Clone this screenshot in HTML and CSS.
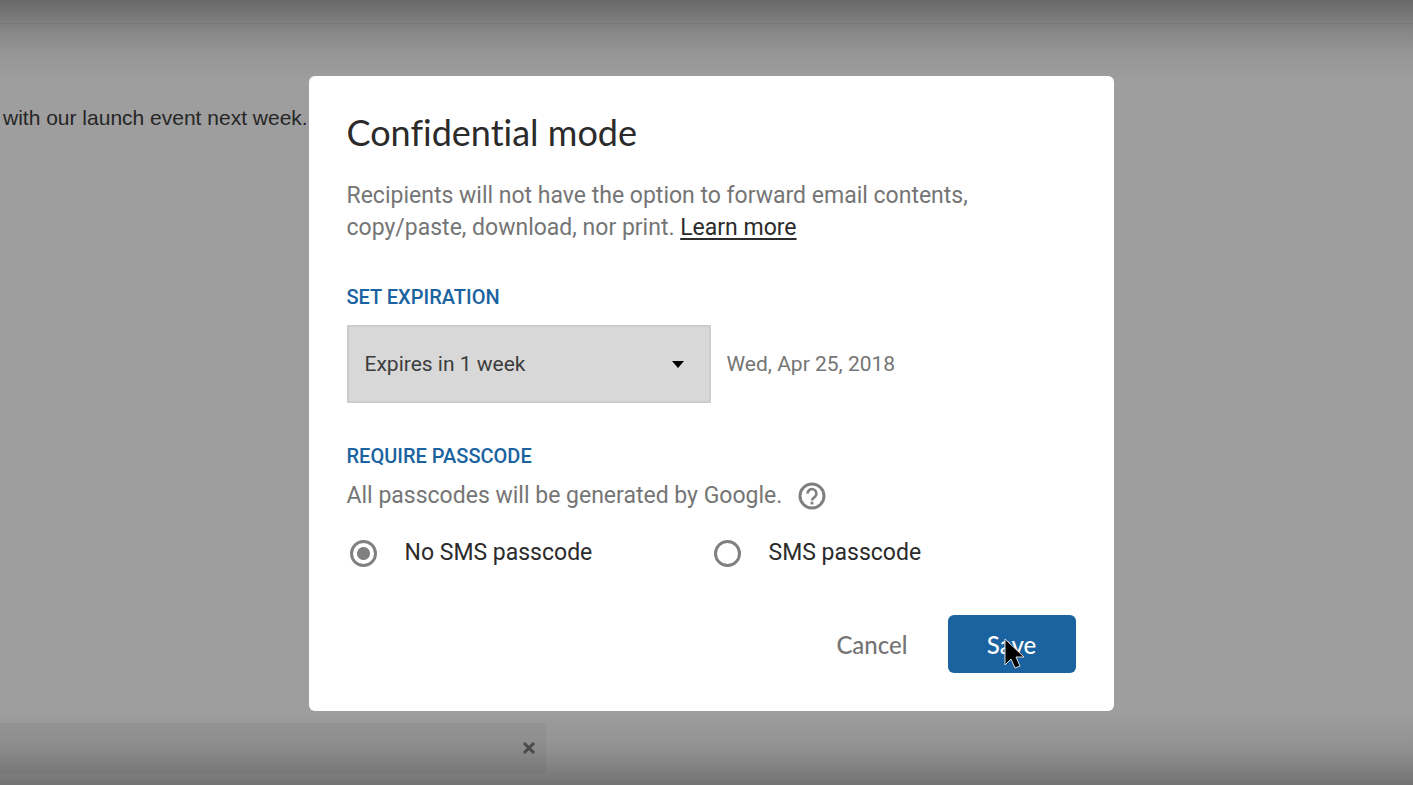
FILE: index.html
```
<!DOCTYPE html>
<html lang="en">
<head>
  <meta charset="UTF-8">
  <meta name="viewport" content="width=device-width, initial-scale=1.0">
  <title>Confidential mode</title>
  <link rel="stylesheet" href="styles.css">
</head>
<body>
  <div class="compose">
    <div class="subject"></div>
    <p class="message">with our launch event next week.</p>
    <div class="attachment">
      <button type="button" class="remove" aria-label="Remove attachment">
        <svg width="14" height="14" viewBox="0 0 14 14"><path d="M2 2l10 10M12 2L2 12" stroke="#4a4a4a" stroke-width="3"/></svg>
      </button>
    </div>
  </div>

  <div class="overlay">
    <form class="dialog" role="dialog" aria-labelledby="title">
      <h1 id="title">Confidential mode</h1>
      <p class="description"><span>Recipients will not have the option to forward email contents,</span> <span>copy/paste, download, nor print.</span> <a href="#">Learn more</a></p>

      <label class="section" for="expiration">SET EXPIRATION</label>
      <div class="expiration">
        <div class="select">
          <select id="expiration">
            <option>Expires in 1 day</option>
            <option selected>Expires in 1 week</option>
            <option>Expires in 1 month</option>
          </select>
          <svg class="arrow" width="12" height="7" viewBox="0 0 12 7"><path d="M0 0h12L6 7z"/></svg>
        </div>
        <span>Wed, Apr 25, 2018</span>
      </div>

      <h2 class="section" id="passcode">REQUIRE PASSCODE</h2>
      <div class="hint">
        <span>All passcodes will be generated by Google.</span>
        <button type="button" class="help" aria-label="Help">
          <svg width="28" height="28" viewBox="0 0 28 28" fill="none" stroke="#808080">
            <circle cx="14" cy="14" r="12" stroke-width="3"/>
            <path d="M9.6 11.6a4.4 4.4 0 1 1 7.6 2.9c-1.5 1.6-3.2 2-3.2 4.1" stroke-width="2.6"/>
            <path d="M14 19.8v2.6" stroke-width="2.8"/>
          </svg>
        </button>
      </div>

      <div class="options" role="radiogroup" aria-labelledby="passcode">
        <label><input type="radio" name="passcode" checked>No SMS passcode</label>
        <label><input type="radio" name="passcode">SMS passcode</label>
      </div>

      <div class="actions">
        <button type="button" class="cancel">Cancel</button>
        <button type="submit" class="save">Save
          <svg class="cursor" width="22" height="34" viewBox="0 0 22 34"><path d="M2 2v26l6-6 4 9 5-2-4-9h8z" fill="#000" stroke="#ddd" stroke-width="1"/></svg>
        </button>
      </div>
    </form>
  </div>
</body>
</html>
```
FILE: styles.css
```
* {
  box-sizing: border-box;
}
body {
  margin: 0;
  font-family: Roboto, Arial, sans-serif;
  font-size: 23px;
  line-height: 32px;
  color: #2b2b2b;
  background-color: #9e9e9e;
}
h1, h2, p {
  margin: 0;
}
button {
  border: none;
  padding: 0;
  background: none;
  cursor: pointer;
}
svg {
  display: block;
}
.compose {
  display: flex;
  flex-direction: column;
  min-height: 100vh;
  background: linear-gradient(#696969, #848484 28px, #949494 50px, #9e9e9e 80px, #9e9e9e calc(100% - 75px), #929292 calc(100% - 38px), #737373);
}
.subject {
  height: 24px;
  border-bottom: 1px solid #787878;
}
.message {
  flex: 1;
  padding: 78px 3px;
  font-family: "Liberation Sans", Arial, sans-serif;
  font-size: 21px;
  color: #262626;
}
.attachment {
  display: flex;
  justify-content: flex-end;
  align-items: center;
  width: 546px;
  height: 50px;
  margin-bottom: 12px;
  padding-right: 10px;
  background-color: rgba(0, 0, 0, 0.04);
}

/* dialog */
.overlay {
  position: fixed;
  inset: 0;
  display: flex;
  justify-content: center;
  align-items: center;
  padding: 2px 0 0 9px;
}
.dialog {
  width: 805px;
  max-width: 100%;
  padding: 35px 38px 38px;
  background-color: #fff;
  border-radius: 6px;
}
h1 {
  margin-bottom: 27px;
  font-family: Lato, sans-serif;
  font-size: 36px;
  font-weight: 400;
  line-height: 42px;
  font-variant-ligatures: none;
}
.description,
.expiration,
.hint {
  color: #757575;
}
.description a {
  color: #2b2b2b;
  text-underline-offset: 3px;
}
.section {
  display: block;
  margin-top: 41px;
  font-size: 20px;
  font-weight: 500;
  line-height: 24px;
  color: #1a63a0;
}
.expiration {
  display: flex;
  align-items: center;
  gap: 16px;
  margin-top: 16px;
  font-size: 21px;
}
.select {
  position: relative;
  width: 364px;
}
select {
  appearance: none;
  width: 100%;
  height: 78px;
  padding: 0 16px;
  border: 2px solid #cccccc;
  border-radius: 0;
  background-color: #d8d8d8;
  font: inherit;
  color: #3c3c3c;
}
.arrow {
  position: absolute;
  top: 36px;
  right: 27px;
  pointer-events: none;
}
.hint {
  display: flex;
  align-items: center;
  gap: 16px;
  margin-top: 12px;
}
.options {
  display: grid;
  grid-template-columns: 364px 1fr;
  margin-top: 25px;
}
.options label {
  display: flex;
  align-items: center;
  gap: 28px;
}
input[type="radio"] {
  appearance: none;
  width: 27px;
  height: 27px;
  margin: 0 0 0 3px;
  border: 3px solid #808080;
  border-radius: 50%;
}
input[type="radio"]:checked {
  background: radial-gradient(circle, #808080 6px, transparent 7px);
}
.actions {
  display: flex;
  justify-content: flex-end;
  gap: 24px;
  margin-top: 46px;
}
.actions button {
  height: 58px;
  border-radius: 6px;
  font-family: Lato, sans-serif;
  font-size: 24px;
  font-weight: 500;
}
.cancel {
  padding: 0 16px;
  color: #757575;
}
.save {
  position: relative;
  width: 128px;
  background-color: #1a63a0;
  color: #fff;
}
.cursor {
  position: absolute;
  top: 22px;
  left: 55px;
}
```
